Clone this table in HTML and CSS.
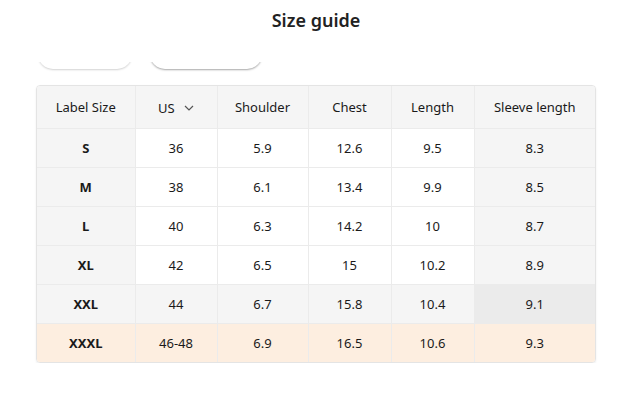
FILE: index.html
```html
<!DOCTYPE html>
<html lang="en">
<head>
    <meta charset="UTF-8">
    <title>Size guide</title>
    <link rel="stylesheet" href="styles.css">
</head>
<body>
    <div class="sheet">
        <h2 class="sheet-title">Size guide</h2>

        <!-- tabs scrolled partly out of view -->
        <div class="tabs">
            <div class="tab"></div>
            <div class="tab tab-active"></div>
        </div>

        <div class="table-wrap">
            <table class="size-table">
                <thead>
                    <tr>
                        <th class="col-label">Label Size</th>
                        <th class="col-us">US <span class="caret"><svg width="10" height="6" viewBox="0 0 10 6"><path d="M1 1l4 4 4-4" fill="none" stroke="#555" stroke-width="1.2"/></svg></span></th>
                        <th class="col-shoulder">Shoulder</th>
                        <th class="col-chest">Chest</th>
                        <th class="col-length">Length</th>
                        <th class="col-sleeve">Sleeve length</th>
                    </tr>
                </thead>
                <tbody>
                    <tr>
                        <td class="size">S</td><td>36</td><td>5.9</td><td>12.6</td><td>9.5</td><td class="sleeve">8.3</td>
                    </tr>
                    <tr>
                        <td class="size">M</td><td>38</td><td>6.1</td><td>13.4</td><td>9.9</td><td class="sleeve">8.5</td>
                    </tr>
                    <tr>
                        <td class="size">L</td><td>40</td><td>6.3</td><td>14.2</td><td>10</td><td class="sleeve">8.7</td>
                    </tr>
                    <tr>
                        <td class="size">XL</td><td>42</td><td>6.5</td><td>15</td><td>10.2</td><td class="sleeve">8.9</td>
                    </tr>
                    <tr class="row-hover">
                        <td class="size">XXL</td><td>44</td><td>6.7</td><td>15.8</td><td>10.4</td><td class="sleeve">9.1</td>
                    </tr>
                    <tr class="row-selected">
                        <td class="size">XXXL</td><td>46-48</td><td>6.9</td><td>16.5</td><td>10.6</td><td class="sleeve">9.3</td>
                    </tr>
                </tbody>
            </table>
        </div>
    </div>
</body>
</html>
```

FILE: styles.css
```css
* {
    margin: 0;
    padding: 0;
    box-sizing: border-box;
}

body {
    font-family: 'Noto Sans', 'Open Sans', sans-serif;
    background-color: #ffffff;
    color: #1a1a1a;
}

.sheet {
    width: 630px;
    padding: 0 34px 0 36px;
}

.sheet-title {
    font-size: 18px;
    font-weight: 600;
    text-align: center;
    line-height: 24px;
    padding-top: 8px;
    color: #222222;
}

/* Tabs, mostly scrolled out of view */
.tabs {
    display: flex;
    gap: 18px;
    margin-top: 30px;
    height: 10px;
    align-items: flex-end;
    overflow: hidden;
    padding: 0 0 0 2px;
}

.tab {
    flex-shrink: 0;
    width: 94px;
    height: 30px;
    border-radius: 15px;
    background-color: #ffffff;
    box-shadow: 0 1px 2px rgba(0, 0, 0, 0.18);
    margin-bottom: 3px;
}

.tab-active {
    width: 112px;
    box-shadow: 0 1px 2px rgba(0, 0, 0, 0.35);
}

/* Table */
.table-wrap {
    margin-top: 13px;
    border: 1px solid #e4e4e4;
    border-radius: 4px;
    overflow: hidden;
    box-shadow: 0 1px 2px rgba(0, 0, 0, 0.08);
}

.size-table {
    width: 100%;
    border-collapse: collapse;
    font-size: 13px;
    text-align: center;
}

.size-table th,
.size-table td {
    border-right: 1px solid #ebebeb;
    border-bottom: 1px solid #ebebeb;
    height: 39px;
    font-weight: 400;
}

.size-table th:last-child,
.size-table td:last-child {
    border-right: none;
}

.size-table tbody tr:last-child td {
    border-bottom: none;
}

.size-table th {
    height: 42px;
    background-color: #f5f5f5;
}

.col-label { width: 98px; }
.col-us { width: 82px; }
.col-shoulder { width: 91px; }
.col-chest { width: 83px; }
.col-length { width: 83px; }

.caret {
    display: inline-block;
    margin-left: 6px;
    vertical-align: 2px;
}

.size-table td.size {
    font-weight: 700;
    background-color: #f5f5f5;
}

.size-table td.sleeve {
    background-color: #f5f5f5;
}

.row-hover td {
    background-color: #f5f5f5;
}

.size-table .row-hover td.sleeve {
    background-color: #ebebeb;
}

.size-table .row-selected td {
    background-color: #fdeee0;
}
```
